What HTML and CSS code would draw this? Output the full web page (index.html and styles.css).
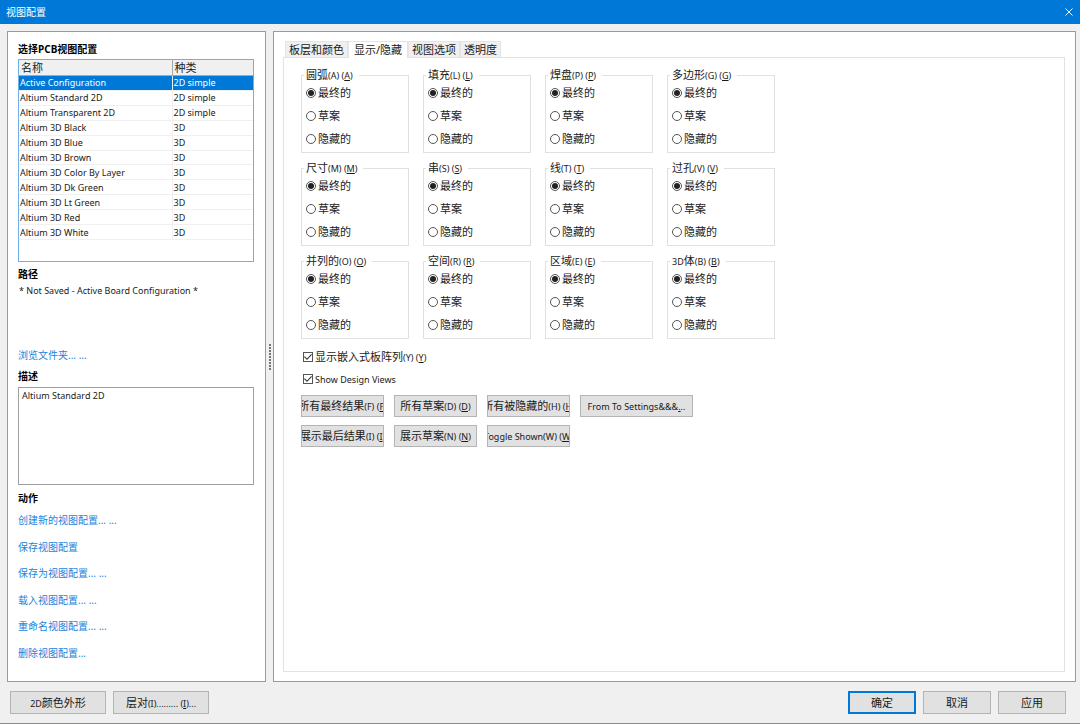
FILE: index.html
```
<!DOCTYPE html>
<html lang="zh-CN">
<head>
    <meta charset="UTF-8">
    <meta name="viewport" content="width=device-width, initial-scale=1.0">
    <title>视图配置</title>
    <link rel="stylesheet" href="styles.css">
</head>
<body>
    <header class="titlebar">
        <h1>视图配置</h1>
        <button class="close" type="button" aria-label="关闭">
            <svg width="8" height="8" viewBox="0 0 8 8"><path d="M0.5 0.5 L7.5 7.5 M7.5 0.5 L0.5 7.5"/></svg>
        </button>
    </header>

    <main class="main">
        <section class="panel sidebar">
            <h2>选择PCB视图配置</h2>
            <div class="list">
                <table>
                    <thead>
                        <tr><th class="name">名称</th><th>种类</th></tr>
                    </thead>
                    <tbody>
                        <tr class="selected"><td>Active Configuration</td><td>2D simple</td></tr>
                        <tr><td>Altium Standard 2D</td><td>2D simple</td></tr>
                        <tr><td>Altium Transparent 2D</td><td>2D simple</td></tr>
                        <tr><td>Altium 3D Black</td><td>3D</td></tr>
                        <tr><td>Altium 3D Blue</td><td>3D</td></tr>
                        <tr><td>Altium 3D Brown</td><td>3D</td></tr>
                        <tr><td>Altium 3D Color By Layer</td><td>3D</td></tr>
                        <tr><td>Altium 3D Dk Green</td><td>3D</td></tr>
                        <tr><td>Altium 3D Lt Green</td><td>3D</td></tr>
                        <tr><td>Altium 3D Red</td><td>3D</td></tr>
                        <tr><td>Altium 3D White</td><td>3D</td></tr>
                    </tbody>
                </table>
            </div>
            <h2>路径</h2>
            <p class="path">* Not Saved - Active Board Configuration *</p>
            <a class="browse" href="#">浏览文件夹... ...</a>
            <h2><label for="description">描述</label></h2>
            <textarea id="description">Altium Standard 2D</textarea>
            <h2>动作</h2>
            <ul class="actions">
                <li><a href="#">创建新的视图配置... ...</a></li>
                <li><a href="#">保存视图配置</a></li>
                <li><a href="#">保存为视图配置... ...</a></li>
                <li><a href="#">载入视图配置... ...</a></li>
                <li><a href="#">重命名视图配置... ...</a></li>
                <li><a href="#">删除视图配置...</a></li>
            </ul>
        </section>

        <div class="splitter"><span class="grip"></span></div>

        <section class="panel content">
            <nav class="tabs">
                <button type="button">板层和颜色</button>
                <button type="button" class="active">显示/隐藏</button>
                <button type="button">视图选项</button>
                <button type="button">透明度</button>
            </nav>
            <div class="page">
                <div class="groups">
                    <fieldset>
                        <legend>圆弧<small>(A) (<u>A</u>)</small></legend>
                        <label><input type="radio" name="arcs" checked>最终的</label>
                        <label><input type="radio" name="arcs">草案</label>
                        <label><input type="radio" name="arcs">隐藏的</label>
                    </fieldset>
                    <fieldset>
                        <legend>填充<small>(L) (<u>L</u>)</small></legend>
                        <label><input type="radio" name="fills" checked>最终的</label>
                        <label><input type="radio" name="fills">草案</label>
                        <label><input type="radio" name="fills">隐藏的</label>
                    </fieldset>
                    <fieldset>
                        <legend>焊盘<small>(P) (<u>P</u>)</small></legend>
                        <label><input type="radio" name="pads" checked>最终的</label>
                        <label><input type="radio" name="pads">草案</label>
                        <label><input type="radio" name="pads">隐藏的</label>
                    </fieldset>
                    <fieldset>
                        <legend>多边形<small>(G) (<u>G</u>)</small></legend>
                        <label><input type="radio" name="polygons" checked>最终的</label>
                        <label><input type="radio" name="polygons">草案</label>
                        <label><input type="radio" name="polygons">隐藏的</label>
                    </fieldset>
                    <fieldset>
                        <legend>尺寸<small>(M) (<u>M</u>)</small></legend>
                        <label><input type="radio" name="dimensions" checked>最终的</label>
                        <label><input type="radio" name="dimensions">草案</label>
                        <label><input type="radio" name="dimensions">隐藏的</label>
                    </fieldset>
                    <fieldset>
                        <legend>串<small>(S) (<u>S</u>)</small></legend>
                        <label><input type="radio" name="strings" checked>最终的</label>
                        <label><input type="radio" name="strings">草案</label>
                        <label><input type="radio" name="strings">隐藏的</label>
                    </fieldset>
                    <fieldset>
                        <legend>线<small>(T) (<u>T</u>)</small></legend>
                        <label><input type="radio" name="tracks" checked>最终的</label>
                        <label><input type="radio" name="tracks">草案</label>
                        <label><input type="radio" name="tracks">隐藏的</label>
                    </fieldset>
                    <fieldset>
                        <legend>过孔<small>(V) (<u>V</u>)</small></legend>
                        <label><input type="radio" name="vias" checked>最终的</label>
                        <label><input type="radio" name="vias">草案</label>
                        <label><input type="radio" name="vias">隐藏的</label>
                    </fieldset>
                    <fieldset>
                        <legend>并列的<small>(O) (<u>O</u>)</small></legend>
                        <label><input type="radio" name="coordinates" checked>最终的</label>
                        <label><input type="radio" name="coordinates">草案</label>
                        <label><input type="radio" name="coordinates">隐藏的</label>
                    </fieldset>
                    <fieldset>
                        <legend>空间<small>(R) (<u>R</u>)</small></legend>
                        <label><input type="radio" name="rooms" checked>最终的</label>
                        <label><input type="radio" name="rooms">草案</label>
                        <label><input type="radio" name="rooms">隐藏的</label>
                    </fieldset>
                    <fieldset>
                        <legend>区域<small>(E) (<u>E</u>)</small></legend>
                        <label><input type="radio" name="regions" checked>最终的</label>
                        <label><input type="radio" name="regions">草案</label>
                        <label><input type="radio" name="regions">隐藏的</label>
                    </fieldset>
                    <fieldset>
                        <legend><small>3D</small>体<small>(B) (<u>B</u>)</small></legend>
                        <label><input type="radio" name="bodies" checked>最终的</label>
                        <label><input type="radio" name="bodies">草案</label>
                        <label><input type="radio" name="bodies">隐藏的</label>
                    </fieldset>
                </div>

                <div class="checks">
                    <label><input type="checkbox" checked><span>显示嵌入式板阵列<small>(Y) (<u>Y</u>)</small></span></label>
                    <label><input type="checkbox" checked><small>Show Design Views</small></label>
                </div>

                <div class="commands">
                    <button type="button" class="btn"><span>所有最终结果<small>(F) (<u>F</u>)</small></span></button>
                    <button type="button" class="btn"><span>所有草案<small>(D) (<u>D</u>)</small></span></button>
                    <button type="button" class="btn"><span>所有被隐藏的<small>(H) (<u>H</u>)</small></span></button>
                    <button type="button" class="btn"><small>From To Settings&amp;&amp;&amp;<u>.</u>..</small></button>
                    <button type="button" class="btn"><span>展示最后结果<small>(I) (<u>I</u>)</small></span></button>
                    <button type="button" class="btn"><span>展示草案<small>(N) (<u>N</u>)</small></span></button>
                    <button type="button" class="btn"><small>Toggle Shown(W) (<u>W</u>)</small></button>
                </div>
            </div>
        </section>
    </main>

    <footer class="footer">
        <button type="button" class="btn wide"><span><small>2D</small>颜色外形</span></button>
        <button type="button" class="btn wide"><span>层对<small>(I)......... (<u>I</u>)...</small></span></button>
        <span class="spacer"></span>
        <button type="button" class="btn default">确定</button>
        <button type="button" class="btn">取消</button>
        <button type="button" class="btn">应用</button>
    </footer>
</body>
</html>
```
FILE: styles.css
```
* { box-sizing: border-box; }
body {
    margin: 0;
    height: 100vh;
    display: flex;
    flex-direction: column;
    background: #f0f0f0;
    border-bottom: 1px solid #4a9ad8;
    color: #1a1a1a;
    font-family: "Noto Sans", "Noto Sans CJK SC", sans-serif;
    font-size: 11px;
    line-height: 16px;
}
button, input, textarea { font: inherit; color: inherit; margin: 0; }
small { font-size: 9px; line-height: 1; }
a { color: #1a84dc; text-decoration: none; }

.titlebar {
    display: flex;
    align-items: center;
    justify-content: space-between;
    height: 24px;
    padding: 0 7px 0 6px;
    background: #0078d7;
    color: white;
}
.titlebar h1 { margin: 0; font-size: 10px; font-weight: normal; }
.close { display: flex; padding: 0; border: none; background: none; }
.close svg { stroke: white; fill: none; }

.main {
    flex: 1;
    display: flex;
    min-height: 0;
    padding: 7px 4px 0 7px;
}
.panel {
    display: flex;
    flex-direction: column;
    background: white;
    border: 1px solid #9a9a9a;
}

/* left side */
.sidebar { width: 259px; padding: 9px 11px 20px 10px; font-size: 10px; }
.sidebar h2 { margin: 0; font-size: 10px; line-height: 16px; color: black; }
.list { height: 203px; margin: 2px 0 4px; border: 1px solid #6fb1e6; }
table { width: 100%; height: 180px; border-collapse: collapse; table-layout: fixed; font-size: 9px; line-height: 12px; }
th, td { padding: 1px 0 0 1px; text-align: left; border-bottom: 1px solid #f0f0f0; border-right: 1px solid #f0f0f0; }
th { font-size: 11px; font-weight: normal; line-height: 14px; padding-left: 2px; background: #f0f0f0; border-color: #a8a8a8; }
th:last-child, td:last-child { border-right: none; }
.name { width: 153px; }
.selected { background: #0078d7; color: white; }
.path { margin: 0; padding: 1px 0 0 1px; font-size: 9px; }
.browse { margin: 48px 0 5px; }
textarea {
    height: 98px;
    margin: 3px 0 5px;
    padding: 1px 3px;
    border: 1px solid #a0a0a0;
    resize: none;
    outline: none;
    font-size: 9px;
    line-height: 14px;
}
.actions {
    flex: 1;
    display: flex;
    flex-direction: column;
    justify-content: space-between;
    list-style: none;
    margin: 6px 0 0;
    padding: 0;
}

.splitter { width: 7px; display: flex; align-items: center; justify-content: center; }
.grip { width: 2px; height: 26px; background: repeating-linear-gradient(#777 0 2px, transparent 2px 3px); }

/* right side */
.content { flex: 1; padding: 9px 10px 9px 9px; }
.tabs { display: flex; align-items: flex-end; padding-left: 2px; }
.tabs button {
    height: 16px;
    padding: 0 3px;
    border: 1px solid #e4e4e4;
    border-bottom: none;
    background: #f0f0f0;
    line-height: 14px;
}
.tabs .active { height: 17px; padding: 0 5px; margin-bottom: -1px; background: white; z-index: 1; }
.page { flex: 1; border: 1px solid #e2e2e2; padding: 9px 17px; }

.groups { display: grid; grid-template-columns: repeat(4, 108px); gap: 7px 14px; }
fieldset {
    display: flex;
    flex-direction: column;
    gap: 7px;
    min-width: 0;
    margin: 0;
    padding: 2px 4px 5px;
    border: 1px solid #e0e0e0;
}
legend { height: 16px; margin-left: -2px; padding: 0 6px 0 2px; }
label { display: flex; align-items: center; gap: 2px; height: 16px; }
h2 label { display: inline; }
input {
    appearance: none;
    display: grid;
    place-items: center;
    width: 10px;
    height: 10px;
    border: 1px solid #555;
    background: white;
}
input[type=radio] { border-radius: 50%; }
input[type=radio]:checked::before { content: ""; width: 6px; height: 6px; border-radius: 50%; background: #222; }
input[type=checkbox]:checked::before {
    content: "";
    width: 8px;
    height: 8px;
    background: #333;
    clip-path: polygon(0 50%, 10% 40%, 38% 68%, 90% 12%, 100% 22%, 38% 86%);
}

.checks { display: flex; flex-direction: column; gap: 6px; margin-top: 10px; padding-left: 2px; }
.commands {
    display: grid;
    grid-template-columns: repeat(3, 83px) 113px;
    gap: 8px 10px;
    margin-top: 8px;
}
.btn {
    display: flex;
    align-items: center;
    justify-content: center;
    height: 22px;
    padding: 0;
    border: 1px solid #b4b4b4;
    background: #e1e1e1;
    white-space: nowrap;
    overflow: hidden;
}
.btn > * { flex: none; }

.footer { display: flex; gap: 7px; padding: 9px 14px 9px 10px; }
.footer .btn { width: 68px; height: 23px; }
.footer .wide { width: 96px; }
.footer .default { border: 2px solid #0078d7; }
.spacer { flex: 1; }
```
